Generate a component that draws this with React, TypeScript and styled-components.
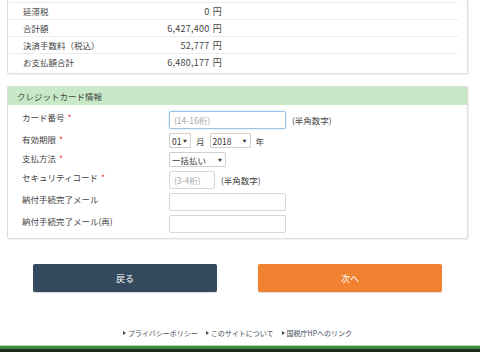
import styled, {createGlobalStyle} from "styled-components";

const GlobalStyle = createGlobalStyle`
    html, body {
        margin: 0;
        padding: 0;
        background: #fff;
    }
    body {
        font-family: "Noto Sans CJK JP", "Noto Sans", sans-serif;
        font-size: 8.5px;
        color: #444;
        overflow: hidden;
    }
`;

const Page = styled.div`
    width: 480px;
    height: 353px;
    display: flex;
    flex-direction: column;
    box-sizing: border-box;
`;

const Main = styled.div`
    padding: 0 12px 0 7px;
    display: flex;
    flex-direction: column;
`;

const Panel = styled.section<{ $top?: boolean }>`
    border: 1px solid #dedede;
    border-top: ${p => (p.$top ? "none" : "1px solid #dedede")};
    border-radius: 0 0 2px 2px;
    box-shadow: 1px 1px 1px rgba(0, 0, 0, 0.06);
    background: #fff;
    margin-top: ${p => (p.$top ? "0" : "12px")};
`;

const SummaryTable = styled.div`
    padding: 2px 9px 3px 1px;
`;

const SummaryRow = styled.div`
    display: flex;
    height: 17px;
    align-items: center;
    border-top: 1px solid #ececec;
    box-sizing: border-box;
`;

const SumLabel = styled.span`
    width: 141px;
    padding-left: 14px;
    box-sizing: border-box;
`;

const SumValue = styled.span`
    width: 72px;
    text-align: right;
    white-space: nowrap;
    font-size: 9px;
    letter-spacing: 0.25px;
    word-spacing: 1px;
`;

const PanelHead = styled.div`
    background: #c7e9c8;
    height: 18px;
    line-height: 18px;
    padding-left: 9px;
    color: #444;
`;

const Form = styled.div`
    display: flex;
    flex-direction: column;
    gap: 4px;
    padding: 6px 0 5px 0;
`;

const FormRow = styled.div`
    display: flex;
    align-items: flex-start;
`;

const Label = styled.span`
    width: 161px;
    padding-left: 14px;
    box-sizing: border-box;
    line-height: 12px;
`;

const Req = styled.span`
    color: #e8434a;
    margin-left: 3px;
`;

const Field = styled.div`
    display: flex;
    align-items: center;
    gap: 6px;
`;

const TextInput = styled.input<{ $w: number; $focus?: boolean }>`
    width: ${p => p.$w}px;
    height: 18px;
    box-sizing: border-box;
    border: 1px solid ${p => (p.$focus ? "#9cc4e4" : "#d6d6d6")};
    box-shadow: ${p => (p.$focus ? "0 0 2px rgba(102,175,233,0.5)" : "none")};
    border-radius: 2px;
    padding: 0 4px;
    font-family: inherit;
    font-size: 8.5px;
    color: #444;
    outline: none;
    &::placeholder {
        color: #a8a8a8;
    }
`;

const SelectWrap = styled.div<{ $w: number }>`
    position: relative;
    width: ${p => p.$w}px;
    height: 15px;
`;

const Select = styled.select`
    appearance: none;
    -webkit-appearance: none;
    width: 100%;
    height: 100%;
    box-sizing: border-box;
    border: 1px solid #cfcfcf;
    border-radius: 1px;
    background: #fff;
    padding: 0 0 0 2px;
    font-family: inherit;
    font-size: 8.5px;
    color: #333;
    outline: none;
`;

const Arrow = styled.span`
    position: absolute;
    right: 4px;
    top: 50%;
    transform: translateY(-50%);
    font-size: 4px;
    color: #333;
    pointer-events: none;
`;

const Note = styled.span`
    color: #444;
`;

const Unit = styled.span`
    margin: 0 -1px;
`;

const Buttons = styled.div`
    display: flex;
    justify-content: center;
    gap: 41px;
    margin-top: 25px;
`;

const Button = styled.button<{ $kind: "back" | "next" }>`
    width: 184px;
    height: 28px;
    border: none;
    border-radius: 2px;
    background: ${p => (p.$kind === "back" ? "#34495e" : "#f08232")};
    color: #fff;
    font-family: inherit;
    font-size: 9px;
    box-shadow: 0 1px 1px rgba(0, 0, 0, 0.15);
`;

const Links = styled.nav`
    display: flex;
    justify-content: center;
    gap: 8px;
    margin-top: 36px;
`;

const Link = styled.a`
    color: #3e4a58;
    font-size: 7px;
    text-decoration: none;
    display: flex;
    align-items: center;
    &::before {
        content: "";
        border-left: 3px solid #3e4a58;
        border-top: 2px solid transparent;
        border-bottom: 2px solid transparent;
        margin-right: 2px;
    }
`;

const Footer = styled.footer`
    margin-top: auto;
    border-top: 1px solid #b9dcb6;
    background: #3d8a3a;
    height: 3px;
    box-shadow: 0 3px 0 #1c2a1b;
    margin-bottom: 4px;
`;

const summary = [
    {label: "延滞税", value: "0 円"},
    {label: "合計額", value: "6,427,400 円"},
    {label: "決済手数料（税込）", value: "52,777 円"},
    {label: "お支払額合計", value: "6,480,177 円"},
];

export default function App() {
    return (
        <Page>
            <GlobalStyle/>
            <Main>
                <Panel $top>
                    <SummaryTable>
                        {summary.map(r => (
                            <SummaryRow key={r.label}>
                                <SumLabel>{r.label}</SumLabel>
                                <SumValue>{r.value}</SumValue>
                            </SummaryRow>
                        ))}
                    </SummaryTable>
                </Panel>

                <Panel>
                    <PanelHead>クレジットカード情報</PanelHead>
                    <Form>
                        <FormRow>
                            <Label>カード番号<Req>*</Req></Label>
                            <Field>
                                <TextInput $w={117} $focus placeholder="(14-16桁)"/>
                                <Note>(半角数字)</Note>
                            </Field>
                        </FormRow>
                        <FormRow>
                            <Label>有効期限<Req>*</Req></Label>
                            <Field>
                                <SelectWrap $w={22}>
                                    <Select defaultValue="01">
                                        <option>01</option>
                                        <option>02</option>
                                    </Select>
                                    <Arrow>▼</Arrow>
                                </SelectWrap>
                                <Unit>月</Unit>
                                <SelectWrap $w={41}>
                                    <Select defaultValue="2018">
                                        <option>2018</option>
                                        <option>2019</option>
                                    </Select>
                                    <Arrow>▼</Arrow>
                                </SelectWrap>
                                <Unit>年</Unit>
                            </Field>
                        </FormRow>
                        <FormRow>
                            <Label>支払方法<Req>*</Req></Label>
                            <Field>
                                <SelectWrap $w={57}>
                                    <Select defaultValue="一括払い">
                                        <option>一括払い</option>
                                    </Select>
                                    <Arrow>▼</Arrow>
                                </SelectWrap>
                            </Field>
                        </FormRow>
                        <FormRow>
                            <Label>セキュリティコード<Req>*</Req></Label>
                            <Field>
                                <TextInput $w={46} placeholder="(3-4桁)"/>
                                <Note>(半角数字)</Note>
                            </Field>
                        </FormRow>
                        <FormRow>
                            <Label>納付手続完了メール</Label>
                            <Field>
                                <TextInput $w={117}/>
                            </Field>
                        </FormRow>
                        <FormRow>
                            <Label>納付手続完了メール(再)</Label>
                            <Field>
                                <TextInput $w={117}/>
                            </Field>
                        </FormRow>
                    </Form>
                </Panel>

                <Buttons>
                    <Button $kind="back">戻る</Button>
                    <Button $kind="next">次へ</Button>
                </Buttons>

                <Links>
                    <Link href="#">プライバシーポリシー</Link>
                    <Link href="#">このサイトについて</Link>
                    <Link href="#">国税庁HPへのリンク</Link>
                </Links>
            </Main>
            <Footer/>
        </Page>
    );
}
